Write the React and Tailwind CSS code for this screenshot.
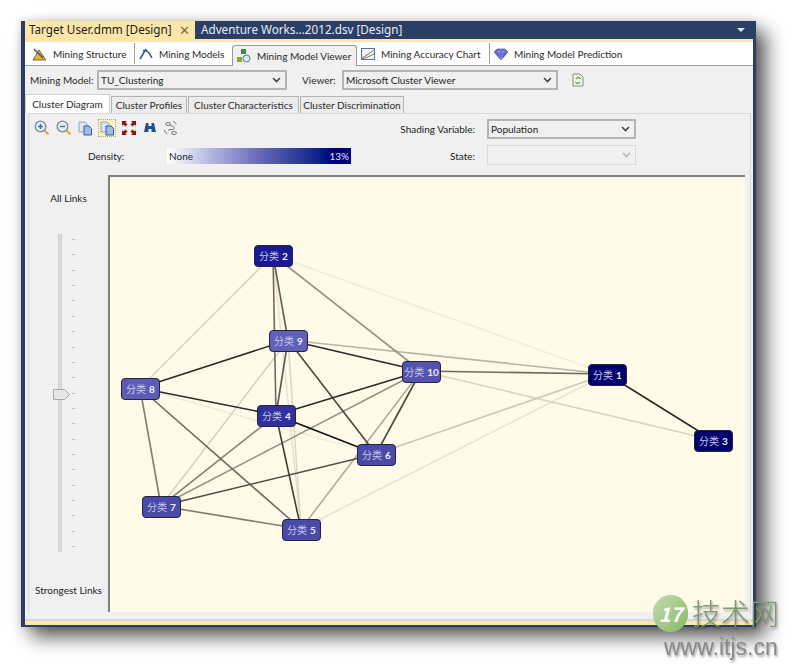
const font = "font-['Lato','Noto_Sans_CJK_SC',sans-serif]";

const nodes = [
  { id: 2, x: 273, y: 256, bg: 'bg-[#1a1a94]' },
  { id: 9, x: 288, y: 341, bg: 'bg-[#6060b8]' },
  { id: 8, x: 140, y: 389, bg: 'bg-[#5c5cb4]' },
  { id: 4, x: 276, y: 416, bg: 'bg-[#30309e]' },
  { id: 10, x: 421, y: 372, bg: 'bg-[#5454ae]' },
  { id: 6, x: 376, y: 455, bg: 'bg-[#4a4aa8]' },
  { id: 7, x: 161, y: 507, bg: 'bg-[#4a4aa8]' },
  { id: 5, x: 301, y: 530, bg: 'bg-[#4a4aa8]' },
  { id: 1, x: 607, y: 375, bg: 'bg-[#02026e]' },
  { id: 3, x: 713, y: 441, bg: 'bg-[#02026e]' },
];

// a, b, colour
const links = [
  [2, 1, '#f0eddd'], [5, 1, '#e8e5d4'], [8, 6, '#f0eddd'], [2, 5, '#e6e3d1'], [9, 5, '#dcd9c8'],
  [2, 8, '#d8d6c5'], [9, 7, '#d6d4c3'], [10, 3, '#d6d4c3'], [6, 1, '#cbc9b8'], [9, 1, '#b8b6a6'],
  [10, 5, '#aeac9c'], [2, 10, '#989689'], [7, 10, '#969487'], [7, 4, '#888679'], [8, 7, '#7f7d71'],
  [8, 5, '#6e6c61'], [7, 5, '#807e72'], [10, 1, '#6e6c61'], [2, 9, '#5f5d54'], [2, 4, '#6e6c61'],
  [9, 4, '#5a5850'], [7, 6, '#504e46'], [9, 6, '#4a4841'], [10, 6, '#4a4841'], [4, 5, '#403e38'],
  [8, 9, '#2c2b26'], [8, 4, '#2c2b26'], [9, 10, '#2c2b26'], [4, 10, '#2c2b26'], [1, 3, '#2c2b26'], [4, 6, '#111111'],
];

const pos = id => nodes.find(n => n.id === id);

function Zoom({ plus }) {
  return (
    <svg width="16" height="16" viewBox="0 0 16 16">
      <circle cx="6.500" cy="6.500" r="5.300" fill="#e4ecf0" stroke="#7b8a94" strokeWidth="1.300" />
      <path d="M10.500 10.500l4 4" stroke="#d9b23c" strokeWidth="2.400" />
      <path d={plus ? 'M4 6.500h5M6.500 4v5' : 'M4 6.500h5'} stroke="#3a6ea5" strokeWidth="1.300" />
    </svg>
  );
}

function Copy() {
  return (
    <svg width="15" height="15" viewBox="0 0 15 15">
      <path d="M1 1h6l2 2v8H1z" fill="#dde6f2" stroke="#8ea3c4" />
      <path d="M6 5h5l2.500 2.500V14H6z" fill="#9dbbe8" stroke="#36589c" />
    </svg>
  );
}

function Caret({ muted }) {
  return (
    <svg width="9" height="6" viewBox="0 0 9 6" className="shrink-0">
      <path d="M1 1l3.500 3.500L8 1" fill="none" stroke={muted ? '#b8b8b8' : '#444444'} strokeWidth="1.600" />
    </svg>
  );
}

function Select({ value, className }) {
  return (
    <div className={`flex items-center justify-between h-[20px] pl-[2px] pr-[4px] border-2 border-[#b4b4b4] bg-[#f0f0f0] text-[#222] ${className}`}>
      <span>{value}</span>
      <Caret />
    </div>
  );
}

const topTabs = [
  { label: 'Mining Structure', style: 'w-[110px] pl-[7px] h-[21px] mb-[1px] border-r border-[#a0a0a0]', icon: <><path d="M1 14L7 4l7 10z" fill="#e6b52e" stroke="#7d6a30" /><path d="M2 3l9 9" stroke="#34548a" strokeWidth="1.500" /></> },
  { label: 'Mining Models', style: 'w-[97px] pl-[3px] h-[21px] mb-[1px]', icon: <path d="M2 13L8 3M5 5c3-2 6 1 9 7" fill="none" stroke="#29598c" strokeWidth="1.500" /> },
  { label: 'Mining Model Viewer', style: 'w-[125px] pl-[3px] h-[21px] mb-[-1px] bg-[#f0f0f0] border border-b-0 border-[#9a9a9a] rounded-t-[3px]', icon: <><rect x="5" y="1" width="5" height="5" fill="#3f8d3f" /><rect x="1" y="9" width="5" height="5" fill="#8aaa2a" /><circle cx="10.500" cy="10.500" r="3.500" fill="#d8e8f4" stroke="#4a7da8" /></> },
  { label: 'Mining Accuracy Chart', style: 'w-[133px] pl-[3px] h-[21px] mb-[1px] border-r border-[#a0a0a0]', icon: <><rect x="1.500" y="2.500" width="13" height="11" fill="#f4f8fc" stroke="#58739a" /><path d="M2 12l5-3 7-5" fill="none" stroke="#c44b3a" /><path d="M2 13l6-2 6-3" fill="none" stroke="#3f9a4a" /></> },
  { label: 'Mining Model Prediction', style: 'w-[140px] pl-[3px] h-[21px] mb-[1px]', icon: <><path d="M1 6l3-3h8l3 3-7 8z" fill="#5b62c8" stroke="#3a3f96" strokeWidth="0.600" /><path d="M4 3l2 3 2-3 2 3 2-3M1 6h14M6 6l2 8 2-8" fill="none" stroke="#a8b0f0" strokeWidth="0.500" /></> },
];

const subTabs = [
  { label: 'Cluster Diagram', style: 'w-[85px] h-[19px] bg-white border-[#d0d0d0]' },
  { label: 'Cluster Profiles', style: 'w-[76px] h-[17px] ml-[1px] bg-[#ececec] border-[#b4b4b4]' },
  { label: 'Cluster Characteristics', style: 'w-[111px] h-[17px] ml-[1px] bg-[#ececec] border-[#b4b4b4]' },
  { label: 'Cluster Discrimination', style: 'w-[104px] h-[17px] ml-[1px] bg-[#ececec] border-[#b4b4b4]' },
];

export default function App() {
  return (
    <div className={`relative w-[798px] h-[669px] bg-white pl-[21px] pt-[21px] overflow-hidden text-[10px] leading-none ${font}`}>
      <div className="flex flex-col w-[735px] h-[606px] bg-[#2b3f66] shadow-[10px_10px_18px_rgba(0,0,0,0.65),0_0_8px_rgba(0,0,0,0.15)] pl-[4px] pr-[3px] pb-[2px]">
        {/* document tabs */}
        <div className="flex h-[18px] shrink-0 items-center text-[11.700px] font-['Noto_Sans',sans-serif]">
          <div className="flex items-center justify-between w-[170px] h-full pl-[4px] pr-[5px] bg-[#fde6a8] text-[#1c1c1c]">
            <span>Target User.dmm [Design]</span>
            <span className="text-[#77705c] text-[13px]">✕</span>
          </div>
          <span className="pl-[6px] text-[#e8ecf4]">Adventure Works...2012.dsv [Design]</span>
          <svg width="8" height="5" viewBox="0 0 8 5" className="ml-auto mr-[8px]"><path d="M0 0h8L4 4z" fill="#e0e4ec" /></svg>
        </div>
        <div className="h-[3px] shrink-0 bg-[#fde6a8]" />

        <div className="flex flex-col flex-1 min-h-0 bg-[#f0f0f0] text-[#2a2a2a]">
          {/* designer tabs */}
          <div className="flex items-end h-[24px] shrink-0 bg-white border-b border-[#a0a0a0]">
            {topTabs.map(t => (
              <div key={t.label} className={`flex items-center gap-[5px] ${t.style}`}>
                <svg width="16" height="16" viewBox="0 0 16 16" className="shrink-0">{t.icon}</svg>
                <span className="whitespace-nowrap">{t.label}</span>
              </div>
            ))}
          </div>

          {/* model and viewer */}
          <div className="flex items-center h-[28px] shrink-0 pl-[5px]">
            <span className="w-[67px] whitespace-nowrap">Mining Model:</span>
            <Select value="TU_Clustering" className="w-[190px]" />
            <span className="ml-[15px] w-[40px]">Viewer:</span>
            <Select value="Microsoft Cluster Viewer" className="w-[216px]" />
            <svg width="12" height="14" viewBox="0 0 12 14" className="ml-[14px]">
              <path d="M1 1h7l3 3v9H1z" fill="#f4f4e4" stroke="#8a8a8a" />
              <path d="M4 6a2.500 2.500 0 0 1 4.500 0M8 9a2.500 2.500 0 0 1-4.500 0" fill="none" stroke="#4e9a3c" strokeWidth="1.200" />
            </svg>
          </div>

          {/* viewer tabs */}
          <div className="flex items-end h-[19px] shrink-0">
            {subTabs.map(t => (
              <div key={t.label} className={`flex items-center justify-center whitespace-nowrap border border-b-0 ${t.style}`}>
                {t.label}
              </div>
            ))}
          </div>

          {/* viewer panel */}
          <div className="flex flex-col flex-1 min-h-0 ml-[3px] mr-[2px] mb-[5px] border border-b-0 border-[#d8d8d8]">
            <div className="relative h-[61px] shrink-0">
              <div className="absolute left-[5px] top-[6px] flex items-center gap-[6px]">
                <Zoom plus />
                <Zoom />
                <Copy />
                <div className="flex items-center justify-center w-[16px] h-[16px] bg-[#fdf0c4] outline-1 outline-dotted outline-[#c8a850]"><Copy /></div>
                <svg width="16" height="16" viewBox="0 0 16 16">
                  <path d="M1 1h5L4.500 2.500 6.500 4.500 4.500 6.500 2.500 4.500 1 6zM15 1v5l-1.500-1.500-2 2-2-2 2-2L10 1zM1 15v-5l1.500 1.500 2-2 2 2-2 2L6 15zM15 15h-5l1.500-1.500-2-2 2-2 2 2L15 10z" fill="#8a1414" />
                </svg>
                <svg width="14" height="14" viewBox="0 0 14 14">
                  <path d="M3 2h2.500v3H8.500V2H11l2 9H8.500V8h-3v3H1z" fill="#24508e" />
                </svg>
                <svg width="16" height="16" viewBox="0 0 16 16" fill="none" stroke="#6a6a6a" strokeWidth="0.900">
                  <ellipse cx="5" cy="4" rx="2.500" ry="1.500" />
                  <ellipse cx="11" cy="13" rx="2.500" ry="1.500" />
                  <path d="M7 5l3 1.500c2 1 1.500 3-.5 3H7c-1 0-2 .5-1 1.500M10 1.500c2 .5 3 1.500 3 3M1.500 10c0 1.500 1 3 3 3.500" />
                </svg>
              </div>
              <span className="absolute left-[59px] top-[37px] text-[#222]">Density:</span>
              <div className="absolute left-[138px] top-[34px] flex items-center justify-between w-[184px] h-[16px] px-[2px] bg-gradient-to-r from-white via-[#6a6ab8] via-50% to-[#00007a] to-90%">
                <span className="text-[#2a2a2a]">None</span>
                <span className="text-[#e4e4f4]">13%</span>
              </div>
              <span className="absolute right-[275px] top-[10px] text-[#222]">Shading Variable:</span>
              <Select value="Population" className="absolute left-[458px] top-[5px] w-[149px]" />
              <span className="absolute right-[275px] top-[37px] text-[#222]">State:</span>
              <div className="absolute left-[458px] top-[31px] flex items-center justify-end w-[149px] h-[20px] pr-[4px] border border-[#d8d8d8]">
                <Caret muted />
              </div>
            </div>

            <div className="flex flex-1 min-h-0">
              {/* links slider */}
              <div className="relative w-[79px] shrink-0">
                <span className="absolute left-0 right-0 top-[18px] text-center text-[#222]">All Links</span>
                <div className="absolute left-[29px] top-[59px] w-[4px] h-[318px] bg-[#dcdcdc] border border-[#d0d0d0]" />
                <div className="absolute left-[43px] top-[64px] flex flex-col gap-[14.370px]">
                  {Array.from({ length: 21 }, (_, i) => <div key={i} className="w-[3px] h-[1px] bg-[#c0c0c0]" />)}
                </div>
                <svg width="18" height="11" viewBox="0 0 18 11" className="absolute left-[24px] top-[214px]">
                  <path d="M.500.500h11l5 5-5 5H.500z" fill="#e6e6e6" stroke="#a8a8a8" />
                </svg>
                <span className="absolute left-0 right-0 top-[410px] text-center text-[#222] whitespace-nowrap">Strongest Links</span>
              </div>

              {/* cluster diagram */}
              <div className="relative flex-1 min-w-0 bg-[#fffbe8] border-l-2 border-t-2 border-[#808080] mr-[5px] mb-[2px]">
                <svg className="absolute left-[-110px] top-[-178px] pointer-events-none" width="798" height="669" viewBox="0 0 798 669">
                  {links.map(([a, b, color]) => (
                    <line key={`${a}-${b}`} x1={pos(a).x} y1={pos(a).y} x2={pos(b).x} y2={pos(b).y} stroke={color} strokeWidth="1.600" />
                  ))}
                </svg>
                {nodes.map(n => (
                  <div
                    key={n.id}
                    style={{ left: n.x - 129, top: n.y - 188 }}
                    className={`absolute flex items-center justify-center gap-[3px] w-[39px] h-[22px] rounded-[4px] border border-[#24243c] ${n.bg}`}
                  >
                    <span className="text-[#c8c8e8] text-[10px]">分类</span>
                    <span className="text-[#eeeef8] text-[10px] font-bold">{n.id}</span>
                  </div>
                ))}
              </div>
            </div>
          </div>
          <div className="h-[2px] shrink-0 bg-[#d8d8dc]" />
        </div>
        <div className="h-[4px] shrink-0 bg-[#fde6a8]" />
      </div>

      {/* site watermark */}
      <div className="absolute left-[653px] top-[595px] w-[135px] h-[66px] font-['Noto_Sans_CJK_SC',sans-serif]">
        <div className="absolute left-0 top-0 flex items-center justify-center w-[35px] h-[37px] rounded-full bg-gradient-to-br from-[#c4dcae] to-[#86b868] text-white text-[20px] italic font-bold">17</div>
        <span className="absolute left-[39px] top-[3px] text-[29px] font-light text-[#7e9a72] drop-shadow-[1px_2px_1px_rgba(0,0,0,0.35)]">技术网</span>
        <span className="absolute left-[11px] top-[41px] text-[23px] text-[#8a8a8a] font-['Liberation_Sans',sans-serif] drop-shadow-[1px_2px_1px_rgba(0,0,0,0.35)]">www.itjs.cn</span>
      </div>
    </div>
  );
}
